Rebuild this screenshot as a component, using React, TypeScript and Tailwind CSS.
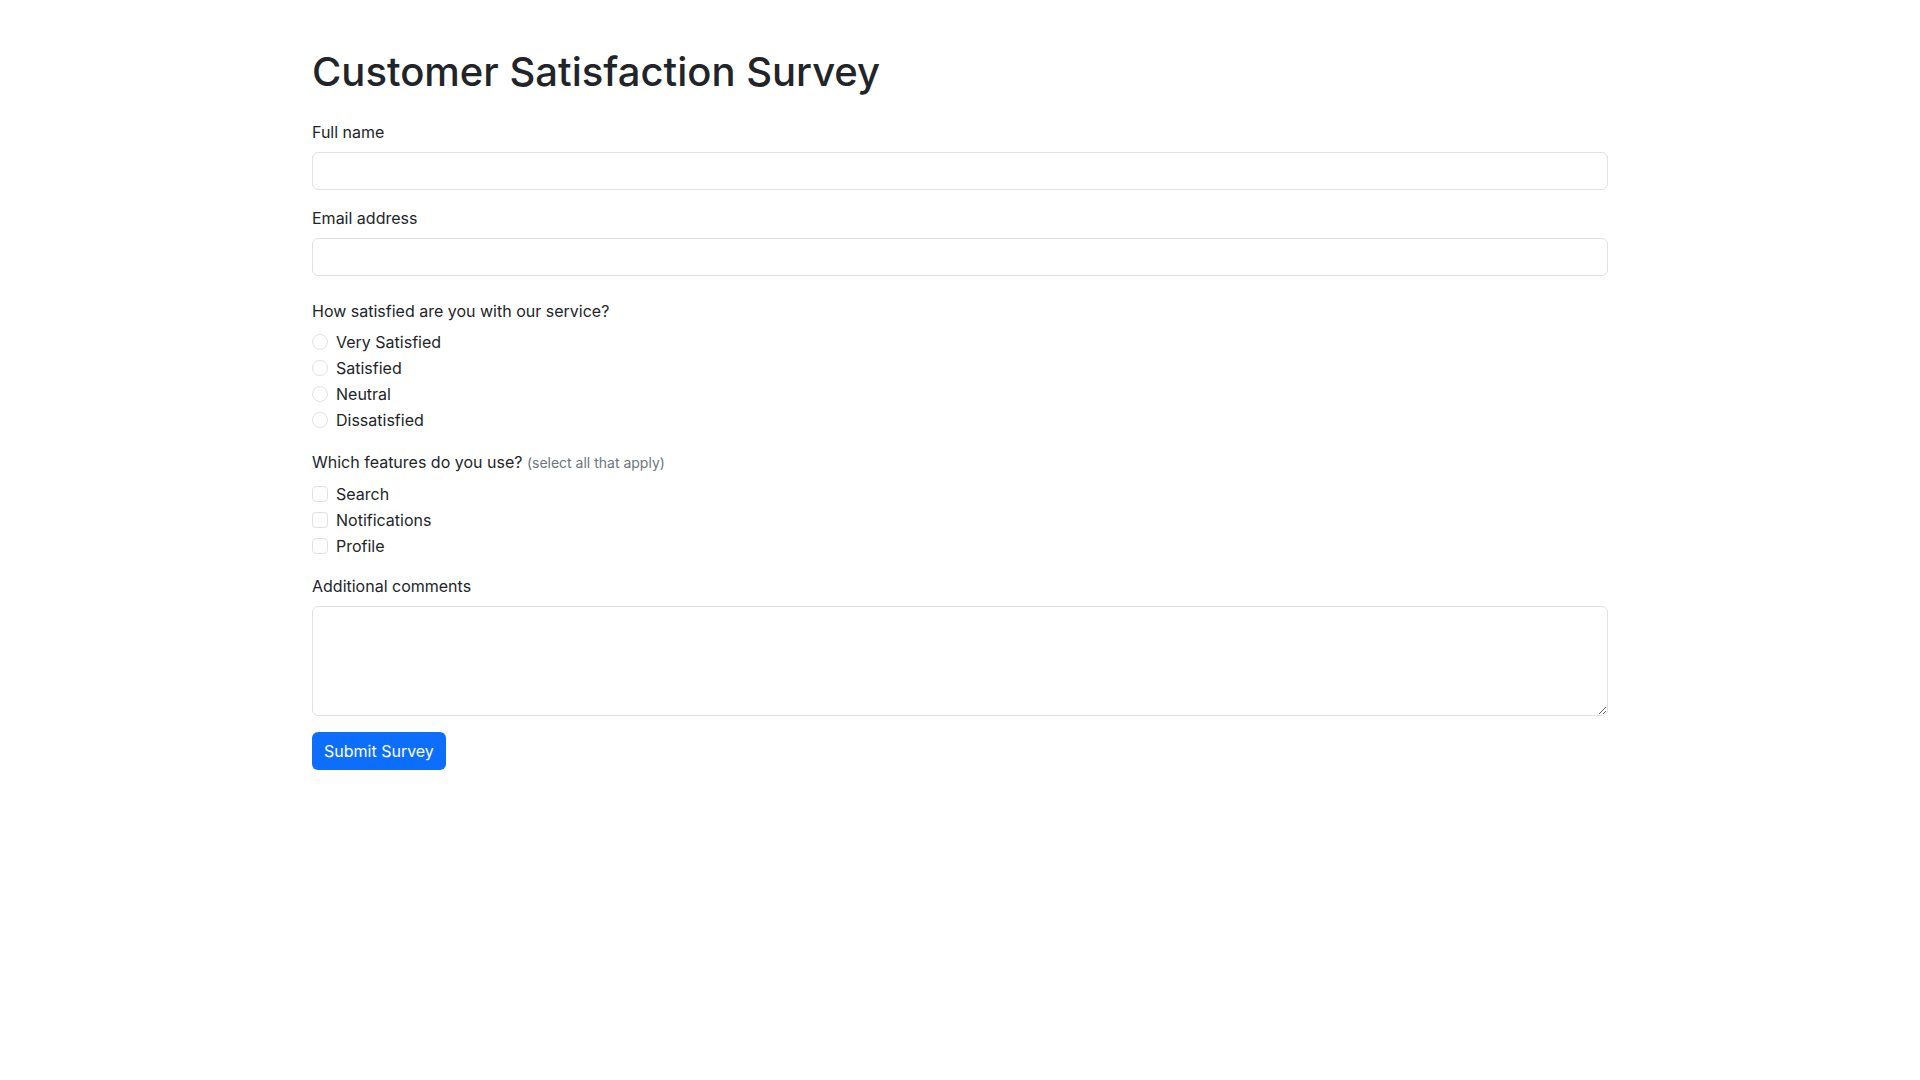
import React from "react";

const font = { fontFamily: "Inter, 'Noto Sans', sans-serif" };

function Radio({ label }: { label: string }) {
  return (
    <div className="flex items-center h-6 mb-[2px]">
      <span className="w-4 h-4 rounded-full border border-[#dee2e6] bg-white shrink-0" />
      <span className="ml-2">{label}</span>
    </div>
  );
}

function Check({ label }: { label: string }) {
  return (
    <div className="flex items-center h-6 mb-[2px]">
      <span className="w-4 h-4 rounded-[4px] border border-[#dee2e6] bg-white shrink-0" />
      <span className="ml-2">{label}</span>
    </div>
  );
}

export default function App() {
  return (
    <div className="min-h-screen bg-white text-[#212529] text-base leading-6" style={font}>
      <div className="w-[1296px] mx-auto pt-12">
        <h1 className="text-[40px] leading-[48px] font-medium mb-6">Customer Satisfaction Survey</h1>

        <label className="block mb-2">Full name</label>
        <input
          type="text"
          className="block w-full h-[38px] border border-[#dee2e6] rounded-[6px] px-3 outline-none mb-4"
        />

        <label className="block mb-2">Email address</label>
        <input
          type="email"
          className="block w-full h-[38px] border border-[#dee2e6] rounded-[6px] px-3 outline-none mb-[23px]"
        />

        <div className="mb-[18px]">
          <div className="mb-[7px]">How satisfied are you with our service?</div>
          <Radio label="Very Satisfied" />
          <Radio label="Satisfied" />
          <Radio label="Neutral" />
          <Radio label="Dissatisfied" />
        </div>

        <div className="mb-4">
          <div className="mb-[7px]">
            Which features do you use?{" "}
            <span className="text-[14px] text-[#6c757d]">(select all that apply)</span>
          </div>
          <Check label="Search" />
          <Check label="Notifications" />
          <Check label="Profile" />
        </div>

        <label className="block mb-2">Additional comments</label>
        <textarea className="block w-full h-[110px] border border-[#dee2e6] rounded-[6px] px-3 py-1.5 outline-none resize-y mb-4" />

        <button className="h-[38px] px-3 rounded-[6px] bg-[#0d6efd] text-white text-base">
          Submit Survey
        </button>
      </div>
    </div>
  );
}
